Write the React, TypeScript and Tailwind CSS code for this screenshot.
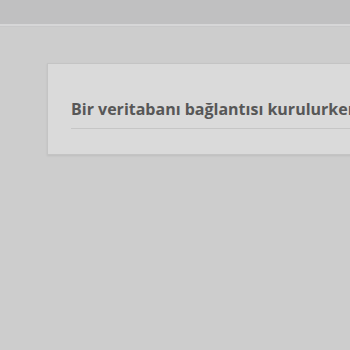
import React from "react";

const App: React.FC = () => {
  return (
    <div className="min-h-[350px] w-[350px] overflow-hidden bg-[#cdcdcd]" style={{ fontFamily: '"Open Sans", "Noto Sans", sans-serif' }}>
      {/* top admin-ish bar */}
      <div className="h-[24px] bg-[#c0c0c1]" />
      <div className="h-[2px] bg-[#d6d6d7]" />
      <div className="h-[1px] bg-[#c8c8c9]" />

      {/* error box */}
      <div className="ml-[47px] mt-[36px] w-[400px] border border-[#c4c4c4] bg-[#dadada] pt-[33px] pb-[25px] pl-[23px] shadow-[0_1px_2px_rgba(0,0,0,0.08)]">
        <h1 className="whitespace-nowrap border-b border-[#c6c6c6] pb-[7px] text-[16px] font-bold leading-[24px] text-[#575757]">
          Bir veritabanı bağlantısı kurulurken hata oluştu
        </h1>
      </div>
    </div>
  );
};

export default App;
